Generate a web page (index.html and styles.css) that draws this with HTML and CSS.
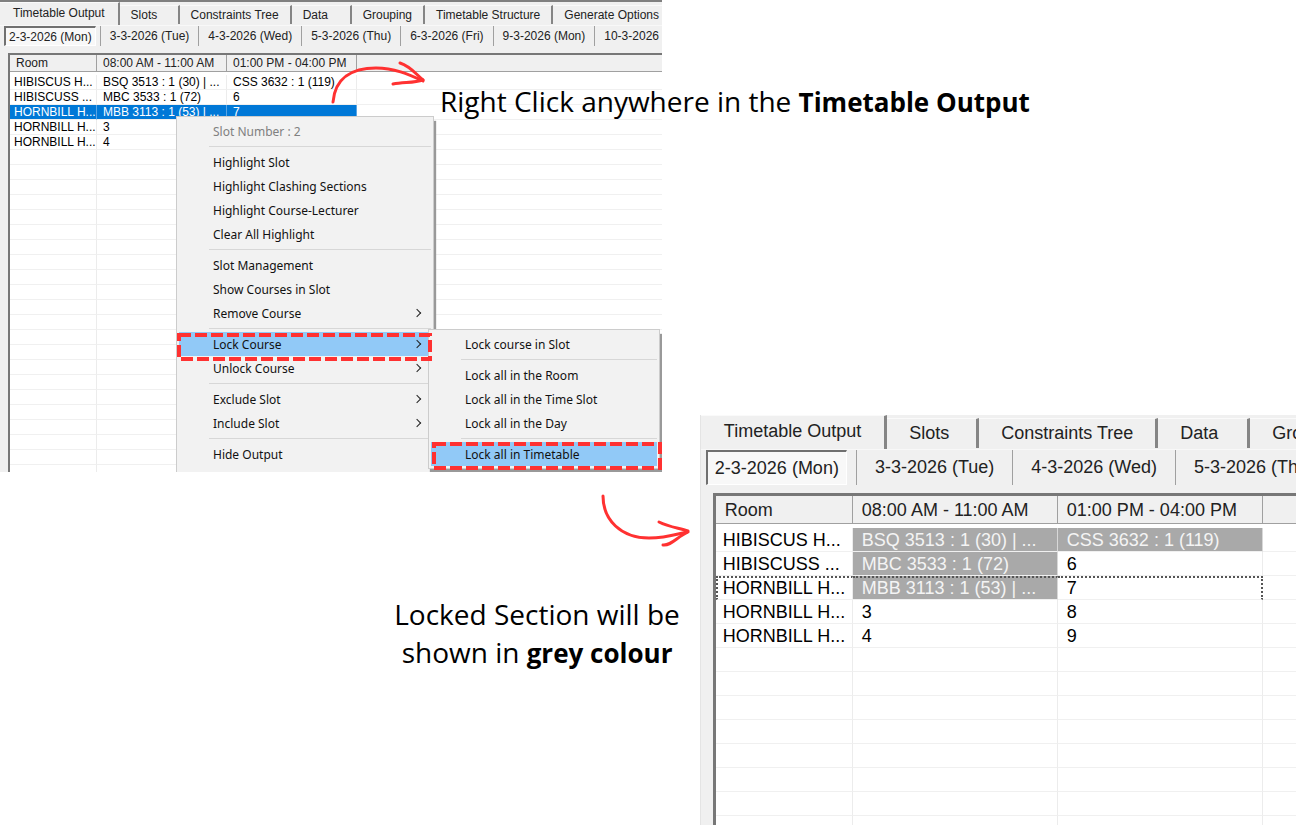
FILE: index.html
```html
<!DOCTYPE html>
<html lang="en">
<head>
   <meta charset="UTF-8">
   <title>Timetable Output - Locking Courses</title>
   <link rel="stylesheet" href="styles.css">
</head>
<body>

   <div class="guide">

      <!-- Left column: output window with the menu open, then the note -->
      <div class="left-side">
         <div class="window small">
            <div class="tabs">
               <button class="active">Timetable Output</button>
               <button>Slots</button>
               <button>Constraints Tree</button>
               <button>Data</button>
               <button>Grouping</button>
               <button>Timetable Structure</button>
               <button>Generate Options</button>
            </div>
            <div class="days">
               <button class="active">2-3-2026 (Mon)</button>
               <button>3-3-2026 (Tue)</button>
               <button>4-3-2026 (Wed)</button>
               <button>5-3-2026 (Thu)</button>
               <button>6-3-2026 (Fri)</button>
               <button>9-3-2026 (Mon)</button>
               <button>10-3-2026</button>
            </div>
            <div class="sheet">
               <table data-blank="24">
                  <colgroup><col class="room"><col class="slot"><col class="slot"><col></colgroup>
                  <thead>
                     <tr><th>Room</th><th>08:00 AM - 11:00 AM</th><th>01:00 PM - 04:00 PM</th><th></th></tr>
                  </thead>
                  <tbody>
                     <tr><td>HIBISCUS H...</td><td>BSQ 3513 : 1 (30) | ...</td><td>CSS 3632 : 1 (119)</td><td></td></tr>
                     <tr><td>HIBISCUSS ...</td><td>MBC 3533 : 1 (72)</td><td>6</td><td></td></tr>
                     <tr class="selected"><td>HORNBILL H...</td><td>MBB 3113 : 1 (53) | ...</td><td>7</td><td></td></tr>
                     <tr><td>HORNBILL H...</td><td>3</td><td></td><td></td></tr>
                     <tr><td>HORNBILL H...</td><td>4</td><td></td><td></td></tr>
                  </tbody>
               </table>
            </div>

            <!-- Right click menu -->
            <div class="menu main-menu">
               <button disabled>Slot Number : 2</button>
               <hr>
               <button>Highlight Slot</button>
               <button>Highlight Clashing Sections</button>
               <button>Highlight Course-Lecturer</button>
               <button>Clear All Highlight</button>
               <hr>
               <button>Slot Management</button>
               <button>Show Courses in Slot</button>
               <button class="more">Remove Course</button>
               <hr>
               <button class="more picked">Lock Course</button>
               <button class="more">Unlock Course</button>
               <hr>
               <button class="more">Exclude Slot</button>
               <button class="more">Include Slot</button>
               <hr>
               <button>Hide Output</button>
            </div>

            <!-- Lock Course submenu -->
            <div class="menu sub-menu">
               <button>Lock course in Slot</button>
               <hr>
               <button>Lock all in the Room</button>
               <button>Lock all in the Time Slot</button>
               <button>Lock all in the Day</button>
               <hr>
               <button class="picked">Lock all in Timetable</button>
            </div>

            <!-- Dashed markers round the two choices -->
            <svg class="marker lock-course" width="255" height="28"><rect x="2" y="2" width="251" height="24"/></svg>
            <svg class="marker lock-timetable" width="230" height="28"><rect x="2" y="2" width="226" height="24"/></svg>
         </div>

         <p class="note locked-note">Locked Section will be<br>shown in <b>grey colour</b></p>
      </div>

      <!-- Right column: result after locking -->
      <div class="right-side">
         <div class="window large">
            <div class="tabs">
               <button class="active">Timetable Output</button>
               <button>Slots</button>
               <button>Constraints Tree</button>
               <button>Data</button>
               <button>Grouping</button>
            </div>
            <div class="days">
               <button class="active">2-3-2026 (Mon)</button>
               <button>3-3-2026 (Tue)</button>
               <button>4-3-2026 (Wed)</button>
               <button>5-3-2026 (Thu)</button>
            </div>
            <div class="sheet">
               <table data-blank="8">
                  <colgroup><col class="room"><col class="slot"><col class="slot"><col></colgroup>
                  <thead>
                     <tr><th>Room</th><th>08:00 AM - 11:00 AM</th><th>01:00 PM - 04:00 PM</th><th></th></tr>
                  </thead>
                  <tbody>
                     <tr><td>HIBISCUS H...</td><td class="locked">BSQ 3513 : 1 (30) | ...</td><td class="locked">CSS 3632 : 1 (119)</td><td></td></tr>
                     <tr><td>HIBISCUSS ...</td><td class="locked">MBC 3533 : 1 (72)</td><td>6</td><td></td></tr>
                     <tr class="focused"><td>HORNBILL H...</td><td class="locked">MBB 3113 : 1 (53) | ...</td><td>7</td><td></td></tr>
                     <tr><td>HORNBILL H...</td><td>3</td><td>8</td><td></td></tr>
                     <tr><td>HORNBILL H...</td><td>4</td><td>9</td><td></td></tr>
                  </tbody>
               </table>
            </div>
         </div>
      </div>

      <!-- Callout and arrows over the windows -->
      <p class="note click-note">Right Click anywhere in the <b>Timetable Output</b></p>
      <svg class="arrow arrow-up" viewBox="0 0 100 50" width="100" height="50">
         <path d="M5 46 C7 22 24 12 48 12 C66 12 80 18 95 25"/>
         <path d="M72 7 C82 10 88 18 95 24"/>
         <path d="M65 28 C76 26 86 27 95 24"/>
      </svg>
      <svg class="arrow arrow-down" viewBox="0 0 100 60" width="100" height="60">
         <path d="M8 6 C8 30 26 48 54 48 C72 48 82 44 92 42"/>
         <path d="M64 32 C74 37 84 38 93 41"/>
         <path d="M68 55 C76 56 82 47 93 42"/>
      </svg>
   </div>

   <script>
      // Fill the rest of each sheet with blank rows
      document.querySelectorAll('table').forEach(function (table) {
         for (let i = 0; i < Number(table.dataset.blank); i++) {
            const row = table.tBodies[0].insertRow();
            for (let c = 0; c < 4; c++) {
               row.insertCell();
            }
         }
      });
   </script>
</body>
</html>
```
FILE: styles.css
```css
* {
   margin: 0;
   padding: 0;
   box-sizing: border-box;
}

body {
   background: #fff;
   color: #000;
}

button {
   border: none;
   background: none;
   font: inherit;
   color: inherit;
   text-align: left;
   white-space: nowrap;
}

.guide {
   position: relative;
   display: grid;
   grid-template-columns: 54% 1fr;
   height: 100vh;
   min-height: 700px;
   overflow: hidden;
}

.left-side {
   display: flex;
   flex-direction: column;
}

.right-side {
   display: flex;
   flex-direction: column;
   min-width: 0;
   min-height: 0;
   padding-top: 415px;
}

/* Application window */
.window {
   position: relative;
   display: flex;
   flex-direction: column;
   overflow: hidden;
   background: #f0f0f0;
   color: #222;
   font-family: "Liberation Sans", Arial, sans-serif;
}

.small {
   --tab: 24px;
   --tab-pad: 11px;
   --active-pad: 13px;
   --tab-min: 60px;
   --tab-line: 2px;
   --day: 20px;
   --day-pad: 9px;
   --row: 15px;
   --head: 17px;
   --head-gap: 3px;
   --cell-pad: 6px;
   --room: 87px;
   --slot: 130px;
   height: 472px;
   margin-right: 38px;
   border-top: 2px solid #808080;
   font-size: 12px;
}

.large {
   --tab: 35px;
   --tab-pad: 22px;
   --active-pad: 23px;
   --tab-min: 92px;
   --tab-line: 3px;
   --day: 35px;
   --day-pad: 18px;
   --row: 24px;
   --head: 28px;
   --head-gap: 4px;
   --cell-pad: 9px;
   --room: 137px;
   --slot: 205px;
   flex: 1;
   border-left: 1px solid #e4e4e4;
   font-size: 18px;
}

/* Tab row */
.tabs {
   display: flex;
   height: var(--tab);
   border-bottom: 1px solid #f8f8f8;
}

.tabs button {
   flex: none;
   min-width: var(--tab-min);
   margin: 3px 0 1px;
   padding: 0 var(--tab-pad);
   border-right: var(--tab-line) solid #858585;
   border-top: 1px solid #fafafa;
}

.tabs button:last-child {
   border-right: none;
}

.tabs .active {
   margin: 0;
   padding: 0 var(--active-pad) 3px;
}

/* Day row */
.days {
   display: flex;
   height: var(--day);
   margin-left: 4px;
}

.days button {
   flex: none;
   padding: 0 var(--day-pad);
   border-left: 1px solid #a0a0a0;
}

.days .active {
   margin-right: 4px;
   padding: 0 3px;
   border: 1px solid #fff;
   border-left: 2px solid #707070;
   border-top: 2px solid #707070;
   background: #f8f8f8;
}

.large .days {
   margin-left: 5px;
}

.large .days .active {
   margin-right: 9px;
   padding: 0 7px;
}

/* Timetable */
.sheet {
   flex: 1;
   overflow: hidden;
   margin: 7px 0 0 8px;
   border-left: 2px solid #777;
   border-top: 2px solid #777;
   background: #fff;
}

.large .sheet {
   margin: 8px 0 0 12px;
   border-width: 3px 0 0 3px;
}

table {
   width: 100%;
   table-layout: fixed;
   border-collapse: separate;
   border-spacing: 0;
}

.room {
   width: var(--room);
}

.slot {
   width: var(--slot);
}

th {
   height: var(--head);
   padding-left: var(--cell-pad);
   border-right: 1px solid #a0a0a0;
   border-bottom: 1px solid #a0a0a0;
   background: #f0f0f0;
   font-weight: normal;
   text-align: left;
   line-height: 1;
   white-space: nowrap;
}

td {
   height: var(--row);
   padding-left: var(--cell-pad);
   border-right: 1px solid #ececec;
   border-bottom: 1px solid #f0f0f0;
   color: #000;
   line-height: 1;
   white-space: nowrap;
   overflow: hidden;
}

td:first-child {
   padding-left: 4px;
}

.large td:first-child {
   padding-left: 7px;
}

th:last-child,
td:last-child {
   border-right: none;
}

/* thin gap under the heading */
tbody::before {
   content: "";
   display: table-row;
   height: var(--head-gap);
}

.selected td:not(:last-child) {
   background: #0078d7;
   border-right-color: #5aa5e4;
   color: #fff;
}

td.locked {
   background: #a9a9a9;
   border-right-color: #d8d8d8;
   color: #f4f4f4;
}

.focused td:not(:last-child) {
   padding-bottom: 2px;
   border-top: 2px dotted #555;
}

.large .focused td:first-child {
   border-left: 2px dotted #555;
   padding-left: 5px;
}

.focused td:nth-child(3) {
   border-right: 2px dotted #555;
}

/* Popup menus */
.menu {
   position: absolute;
   display: flex;
   flex-direction: column;
   padding: 2px;
   border: 1px solid #ccc;
   background: #f2f2f2;
   box-shadow: 2px 5px 1px #999;
   color: #111;
   font-family: "Noto Sans", sans-serif;
   font-size: 12px;
}

.main-menu {
   left: 176px;
   top: 114px;
   width: 258px;
   padding-bottom: 8px;
}

.sub-menu {
   left: 428px;
   top: 327px;
   width: 232px;
}

.menu button {
   position: relative;
   height: 24px;
   padding-left: 34px;
}

.menu button:disabled {
   color: #808080;
}

.menu hr {
   height: 1px;
   margin: 3px 0 3px 30px;
   border: none;
   background: #d7d7d7;
}

.menu .picked {
   background: #91c9f7;
}

/* submenu chevron */
.more::after {
   content: "";
   position: absolute;
   right: 11px;
   top: 9px;
   width: 5px;
   height: 5px;
   border-top: 1px solid #222;
   border-right: 1px solid #222;
   transform: rotate(45deg);
}

.marker {
   position: absolute;
   fill: none;
   stroke: #ff3131;
   stroke-width: 4;
   stroke-dasharray: 12 4;
}

.lock-course {
   left: 177px;
   top: 331px;
}

.lock-timetable {
   left: 432px;
   top: 440px;
}

/* Notes and arrows */
.note {
   font-family: "Open Sans", sans-serif;
   font-size: 28px;
   line-height: 38px;
}

.note b {
   font-size: 26px;
}

.locked-note {
   align-self: flex-end;
   margin: 123px 20px 0 0;
   text-align: center;
}

.click-note {
   position: absolute;
   left: 440px;
   top: 82px;
   white-space: nowrap;
}

.arrow {
   position: absolute;
   fill: none;
   stroke: #ff3131;
   stroke-width: 3;
   stroke-linecap: round;
   stroke-linejoin: round;
}

.arrow-up {
   left: 328px;
   top: 56px;
}

.arrow-down {
   left: 595px;
   top: 490px;
}
```
